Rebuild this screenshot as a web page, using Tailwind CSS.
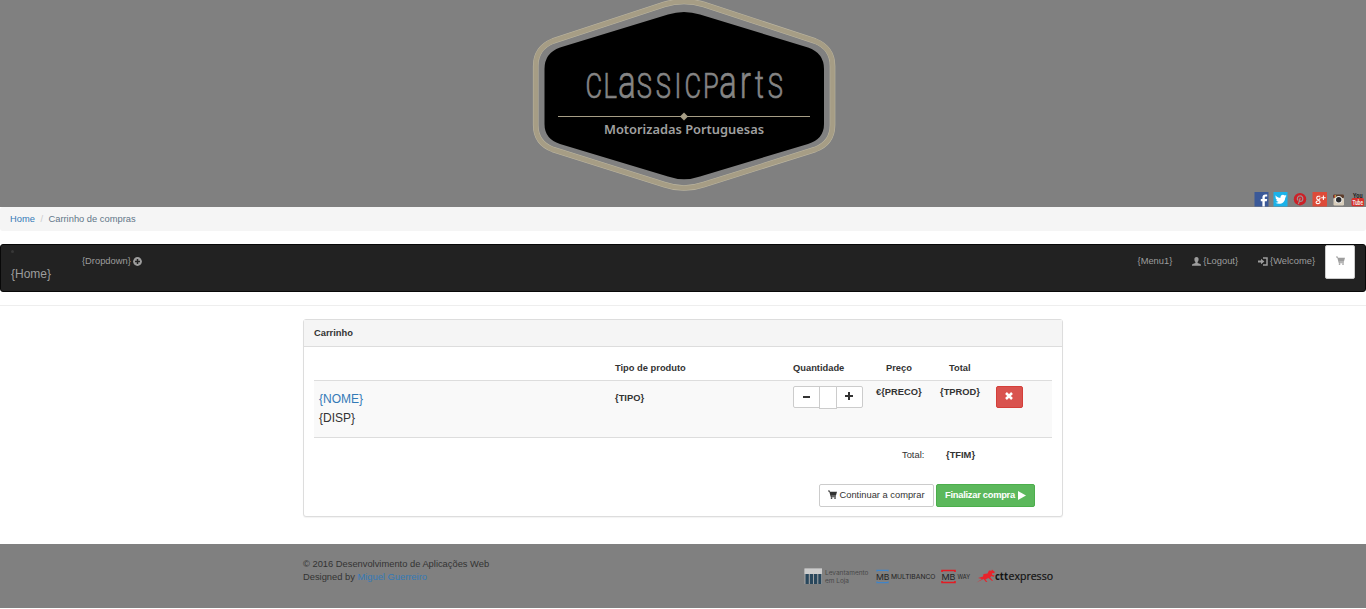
<!DOCTYPE html>
<html lang="pt">
<head>
<meta charset="utf-8">
<title>Carrinho de compras</title>
<script src="https://cdn.jsdelivr.net/npm/@tailwindcss/browser@4"></script>
</head>
<body class="h-[609px] overflow-hidden bg-white text-[9.33px] leading-[13px] text-[#333] [font-family:'Liberation_Sans',Arial,sans-serif]">
<svg class="hidden">
  <symbol id="cart" viewBox="0 0 16 16"><path d="M0 1h3l.8 2H16l-2 7H6l.3 1.2H14v1.500H5L2.200 2.500H0z"/><circle cx="6.300" cy="14.300" r="1.500"/><circle cx="12.500" cy="14.300" r="1.500"/></symbol>
</svg>
<header class="flex h-[207px] flex-col items-center bg-[#808080]">
  <svg class="h-[192px] w-[310px] shrink-0" viewBox="528 0 310 192">
    <path d="M664 4.500Q684 -1.500 704 4.500L815 41Q832.500 48 832.500 66V125Q832.500 143 815 149.500L704 184.500Q684 191.500 664 184.500L553 149.500Q535.700 143 535.700 125V66Q535.700 48 553 41Z" fill="none" stroke="#bdb7a2" stroke-width="5.600"/>
    <path d="M664 4.500Q684 -1.500 704 4.500L815 41Q832.500 48 832.500 66V125Q832.500 143 815 149.500L704 184.500Q684 191.500 664 184.500L553 149.500Q535.700 143 535.700 125V66Q535.700 48 553 41Z" fill="none" stroke="#a69d85" stroke-width="4.600"/>
    <path d="M668 14.500Q684 9.500 700 14.500L808 47.500Q824 53 824 69V124Q824 139 808 144L700 176.500Q684 182 668 176.500L560 144Q544.500 139 544.500 124V69Q544.500 53 560 47.500Z" fill="#000"/>
    <text transform="scale(.72 1)" y="98.500" x="813.300 838.200 858.300 884.300 910.700 936.800 950.800 976.500 998.600 1027.500 1048.600 1066.300" fill="#858585" stroke="#858585" stroke-width=".7" font-family="Roboto, sans-serif" font-weight="300" font-size="35.500">CL<tspan font-size="46">a</tspan>SSICP<tspan font-size="46">ar</tspan><tspan font-size="38">t</tspan>S</text>
    <path d="M558 116.500H810" stroke="#a69d85" stroke-width="1.200"/>
    <path d="M684 112.500l4 4-4 4-4-4z" fill="#a69d85"/>
    <text x="604" y="134" fill="#a0a0a0" font-family="'Noto Sans', sans-serif" font-weight="600" font-size="12.500" textLength="160" lengthAdjust="spacingAndGlyphs">Motorizadas Portuguesas</text>
  </svg>
  <div class="flex h-[15px] w-full items-end justify-end">
    <svg class="h-[15px] w-[114px]" viewBox="1252 192 114 15">
      <rect x="1254.500" y="192" width="14" height="14.500" fill="#3b5998"/><path d="M1264.800 206.500v-5.300h2l.4-2.200h-2.400v-1.200c0-.9.4-1.300 1.300-1.300h1.100v-2.100h-1.800c-2 0-3 1.200-3 3.100v1.500h-1.600v2.200h1.600v5.300z" fill="#fff"/>
      <rect x="1273.500" y="192" width="14" height="14.500" fill="#1bb2e9"/><path d="M1275.500 195.500c1.500 1.700 3 2.300 5 2.300-.3-2.900 2.600-4 4.300-2.300l1.700-.6-1 1.700.9-.2-1.200 1.300c0 5.400-5.600 7.500-9.900 5 1.500 0 2.500-.4 3.200-1-1.200-.2-1.900-.9-2.200-1.800h1c-1.200-.5-1.800-1.400-1.800-2.600l.9.300c-1-.9-1.300-1.900-.9-2.100z" fill="#fff"/>
      <circle cx="1300" cy="199.200" r="6.200" fill="#cb2027"/><path d="M1298.200 200.500c-2-2-.4-4.600 2-4.600 3.800 0 3 5.500.4 5.500-.7 0-1.100-.4-1.100-.9l.7-2.600m-.6 2.300-1.200 4" fill="none" stroke="#a09090" stroke-width="1.200"/>
      <rect x="1312.500" y="192" width="14.500" height="14.500" fill="#dd4b39"/><path d="M1320.300 196.200h-2.300a1.900 1.900 0 0 0 0 3.600c1.500 0 2.100-.7 2-2.300M1318.500 200c3 2 1.200 3.800-.8 3.600-2.500-.2-2.100-2.700.9-2.800M1323.400 195.500v4.500M1321.200 197.800h4.500" fill="none" stroke="#fff" stroke-width="1.100"/>
      <rect x="1333" y="194.500" width="11" height="3.500" rx="1.200" fill="#5c3c2b"/><path d="M1334 195h.8v3h-.8z" fill="#c44"/><path d="M1335.200 195h.8v3h-.8z" fill="#cb4"/><rect x="1333.500" y="198" width="10.500" height="7.500" rx="1.200" fill="#d8cdbb"/><circle cx="1338.700" cy="199.700" r="3.600" fill="#eee"/><circle cx="1338.700" cy="199.700" r="2.700" fill="#29292c"/>
      <text x="1353" y="197.500" font-family="Roboto" font-weight="700" font-size="6.500" textLength="9.500" lengthAdjust="spacingAndGlyphs" fill="#242424">You</text><rect x="1351.500" y="198" width="12.500" height="8.200" rx="1.500" fill="#d9302b"/><text x="1352.500" y="204.700" font-family="Roboto" font-weight="700" font-size="6.500" textLength="10.500" lengthAdjust="spacingAndGlyphs" fill="#eee">Tube</text>
    </svg>
  </div>
</header>
<nav class="flex h-6 items-center rounded-[3px] bg-[#f5f5f5] px-[10px] text-[#777]">
  <a class="text-[#337ab7]">Home</a><span class="px-[5.500px] text-[#ccc]">/</span><a class="text-[#627688]">Carrinho de compras</a>
</nav>
<nav class="mt-[13px] flex h-12 items-start rounded-[3px] border border-[#080808] bg-[#222] text-[#9d9d9d]">
  <div class="w-[71px] pt-[5px] pl-[10px]"><div class="h-[3px] w-[3px] rounded-full bg-[#383838]"></div><a class="mt-[13px] block text-[12px] leading-4">{Home}</a></div>
  <a class="ml-[10px] flex items-center gap-[2px] pt-[10px]">{Dropdown}<svg class="-mt-px h-[9px] w-[9px]" viewBox="0 0 9 9"><circle cx="4.500" cy="4.500" r="4.400" fill="currentColor"/><path d="M4.500 2v5M2 4.500h5" stroke="#222" stroke-width="1.500"/></svg></a>
  <div class="ml-auto flex items-start">
    <a class="pt-[10px]">{Menu1}</a>
    <a class="ml-[20px] flex items-center gap-[2px] pt-[10px]"><svg class="-mt-px h-[9px] w-[9px]" viewBox="0 0 9 9" fill="currentColor"><path d="M4.500 0c1.600 0 2.200 1.100 2.100 2.600 0 1.200-.5 2-1 2.500v.8l2.700 1.200c.5.200.7.700.7 1.700H0c0-1 .2-1.500.7-1.700l2.700-1.200v-.8c-.6-.5-1-1.300-1-2.500C2.300 1.100 3 0 4.500 0z"/></svg>{Logout}</a>
    <a class="ml-[20px] flex items-center gap-[2px] pt-[10px]"><svg class="-mt-px h-[9px] w-[10px]" viewBox="0 0 10 9"><path d="M5 1h4v7H5" fill="none" stroke="currentColor" stroke-width="1.500"/><path d="M0 3.500h3V1.700l3.400 2.800L3 7.300V5.500H0z" fill="currentColor"/></svg>{Welcome}</a>
    <button class="mr-[10px] ml-[10px] flex h-[34px] w-[30px] items-center justify-center rounded-[2px] border border-[#ccc] bg-white"><svg class="-mt-[3px] h-[9px] w-[9px] fill-[#9d9d9d]"><use href="#cart"/></svg></button>
  </div>
</nav>
<hr class="mt-[13px] border-t border-[#eee]">
<main class="mx-auto mt-[13px] h-[198px] w-[760px] rounded-[3px] border border-[#ddd] bg-white shadow-[0_1px_1px_rgba(0,0,0,0.05)]">
  <h3 class="h-[27px] border-b border-[#ddd] bg-[#f5f5f5] px-[10px] pt-[7px] font-bold">Carrinho</h3>
  <div class="mx-[10px]">
    <div class="grid h-[34px] grid-cols-[301px_178px_83px_64px_112px] border-b border-[#ddd] pt-[15px] font-bold">
      <span></span><span>Tipo de produto</span><span>Quantidade</span><span class="pl-[10px]">Preço</span><span class="pl-[9px]">Total</span>
    </div>
    <div class="grid h-[57px] grid-cols-[301px_178px_83px_64px_56px_56px] items-start border-b border-[#ddd] bg-[#f9f9f9] pt-[5px]">
      <div class="pt-[4px] pl-[5px] text-[12px] leading-[19px]"><a class="block text-[#337ab7]">{NOME}</a><p>{DISP}</p></div>
      <span class="pt-[6px] font-bold">{TIPO}</span>
      <div class="flex items-start">
        <button class="flex h-[22px] w-[27px] items-center justify-center rounded-l-[2px] border border-[#ccc] bg-white pb-px"><span class="h-[2px] w-[7px] bg-[#333]"></span></button>
        <span class="-ml-px h-[23px] w-[18px] border border-[#ccc] bg-white"></span>
        <button class="-ml-px flex h-[22px] w-[27px] items-center justify-center rounded-r-[2px] border border-[#ccc] bg-white pr-px pb-[2px]"><svg class="h-2 w-2" viewBox="0 0 8 8"><path d="M4 0v8M0 4h8" stroke="#333" stroke-width="2"/></svg></button>
      </div>
      <span class="font-bold">€{PRECO}</span>
      <span class="font-bold">{TPROD}</span>
      <button class="flex h-[22px] w-[27px] items-center justify-center rounded-[2px] border border-[#d43f3a] bg-[#d9534f] pr-px"><svg class="-mt-[2px] h-2 w-2" viewBox="0 0 8 8"><path d="M1 1l6 6M7 1L1 7" stroke="#fff" stroke-width="2.500"/></svg></button>
    </div>
    <div class="flex pt-[11px] pl-[588px]"><span class="w-[44px]">Total:</span><b>{TFIM}</b></div>
    <div class="mt-[22px] flex justify-end gap-[2px] pr-[17px]">
      <button class="flex h-[23px] w-[115px] items-center justify-center gap-[2px] rounded-[2px] border border-[#ccc] bg-white pb-px"><svg class="-mt-px h-[9px] w-[9px] fill-[#333]"><use href="#cart"/></svg><span>Continuar a comprar</span></button>
      <button class="flex h-[23px] w-[99px] items-center justify-center gap-[3px] rounded-[2px] border border-[#4cae4c] bg-[#5cb85c] pb-px text-white"><span class="font-bold tracking-[-0.27px]">Finalizar compra</span><svg class="h-[9px] w-[8px]" viewBox="0 0 8 9"><path d="M0 0l8 4.500L0 9z" fill="#fff"/></svg></button>
    </div>
  </div>
</main>
<footer class="mt-[27px] h-16 bg-[#808080] pt-[14px]">
  <div class="mx-auto flex w-[760px] justify-between">
    <div><p>© 2016 Desenvolvimento de Aplicações Web</p><p>Designed by <a class="text-[#337ab7]">Miguel Guerreiro</a></p></div>
    <svg class="mt-[9px] mr-[8px] h-[20px] w-[252px]" viewBox="803 567 252 20" font-family="'Open Sans', sans-serif">
      <rect x="804.500" y="568.500" width="17.500" height="15.500" fill="#aaa"/><rect x="804.500" y="568.500" width="17.500" height="5.500" fill="#ccc"/><path d="M805.500 574h3.300v10h-3.300zM809.800 574h3.300v10h-3.300zM814 574h3.300v10H814zM818.300 574h3v10h-3z" fill="#29475c"/>
      <g fill="#484848" font-family="Inter, sans-serif" font-size="6"><text x="825" y="575" textLength="43.500" lengthAdjust="spacingAndGlyphs">Levantamento</text><text x="825" y="583" textLength="24" lengthAdjust="spacingAndGlyphs">em Loja</text></g>
      <path d="M877 571.500v-1.200h11V571.500M877 581.500v1.200h11V581.500" fill="none" stroke="#4084c8" stroke-width="1.300"/>
      <path d="M942 572v-1.500h13V572M942 581v1.500h13V581" fill="none" stroke="#e31b23" stroke-width="1.600"/>
      <g fill="#222" font-family="Inter, sans-serif"><text x="876" y="579.500" font-size="8" textLength="13.500" lengthAdjust="spacingAndGlyphs">MB</text><text x="891" y="579" font-size="6.300" textLength="44.500" lengthAdjust="spacingAndGlyphs">MULTIBANCO</text><text x="941.500" y="579.500" font-size="8" textLength="14" lengthAdjust="spacingAndGlyphs">MB</text><text x="957.500" y="579" font-size="5.500" textLength="12.500" lengthAdjust="spacingAndGlyphs">WAY</text></g>
      <path d="M976.500 582.500l5.500-3.500-4-1 5-1.500.5-2.500 4-.5 1.500-3 2.500.2.500-1.200 1 1 2 1.500-1 1.300-1.700-.3-.3 1.700 2.500.7-1 1.500-2-1-1.300 1.600 2.700 3-.8.600-3.700-3.100-3 1.500 2 2.500H986l-2.500-3z" fill="#e8232b"/>
      <g fill="#111" font-size="11"><text x="995" y="580" font-weight="700" textLength="13" lengthAdjust="spacingAndGlyphs">ctt</text><text x="1008.500" y="580" font-weight="500" textLength="44.500" lengthAdjust="spacingAndGlyphs" stroke="#111" stroke-width=".2">expresso</text></g>
    </svg>
  </div>
</footer>
</body>
</html>
